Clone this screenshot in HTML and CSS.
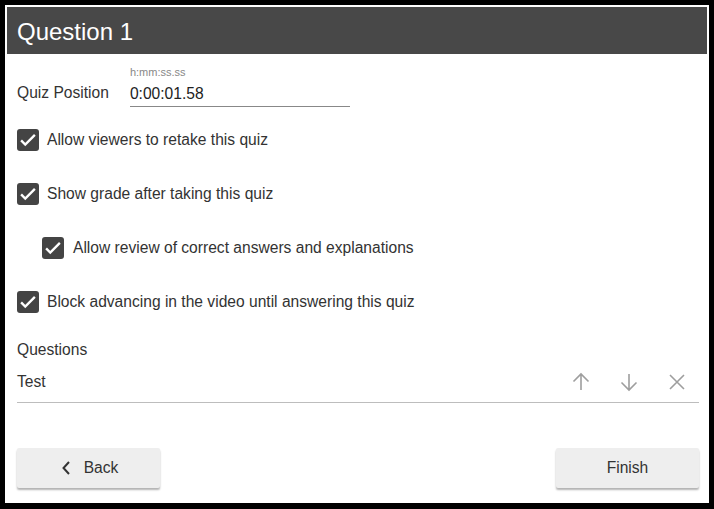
FILE: index.html
```html
<!DOCTYPE html>
<html lang="en">
<head>
    <meta charset="UTF-8">
    <title>Question 1</title>
    <link rel="stylesheet" href="styles.css">
</head>
<body>

    <div class="dialog">
        <div class="dialog-title">Question 1</div>

        <div class="dialog-body">
            <div class="position-row">
                <span class="position-label">Quiz Position</span>
                <div class="field">
                    <span class="field-hint">h:mm:ss.ss</span>
                    <div class="field-input">0:00:01.58</div>
                </div>
            </div>

            <div class="options">
                <label class="check-row">
                    <span class="check"><svg viewBox="0 0 24 24"><path d="M4.5 12.5l4.5 4.5L19.5 6.5"/></svg></span>
                    Allow viewers to retake this quiz
                </label>
                <label class="check-row">
                    <span class="check"><svg viewBox="0 0 24 24"><path d="M4.5 12.5l4.5 4.5L19.5 6.5"/></svg></span>
                    Show grade after taking this quiz
                </label>
                <label class="check-row nested">
                    <span class="check"><svg viewBox="0 0 24 24"><path d="M4.5 12.5l4.5 4.5L19.5 6.5"/></svg></span>
                    Allow review of correct answers and explanations
                </label>
                <label class="check-row">
                    <span class="check"><svg viewBox="0 0 24 24"><path d="M4.5 12.5l4.5 4.5L19.5 6.5"/></svg></span>
                    Block advancing in the video until answering this quiz
                </label>
            </div>

            <div class="questions-title">Questions</div>
            <div class="question-item">
                <span class="question-name">Test</span>
                <div class="question-actions">
                    <svg class="icon" viewBox="0 0 24 24"><path d="M12 20V4M4.5 11.5L12 4l7.5 7.5"/></svg>
                    <svg class="icon" viewBox="0 0 24 24"><path d="M12 4v16M4.5 12.5L12 20l7.5-7.5"/></svg>
                    <svg class="icon" viewBox="0 0 24 24"><path d="M5 5l14 14M19 5L5 19"/></svg>
                </div>
            </div>

            <div class="footer">
                <button class="btn">
                    <svg class="chevron" viewBox="0 0 10 16"><path d="M8 2L2.5 8 8 14"/></svg>
                    Back
                </button>
                <button class="btn">Finish</button>
            </div>
        </div>
    </div>

</body>
</html>
```

FILE: styles.css
```css
/* Page and frame */
html, body {
    margin: 0;
    height: 100%;
}
body {
    background: #000;
    padding: 5px;
    box-sizing: border-box;
    font-family: "Liberation Sans", Arial, sans-serif;
    color: #333;
}

.dialog {
    background: #fff;
    width: 704px;
    height: 498px;
    padding: 2px;
    box-sizing: border-box;
    display: flex;
    flex-direction: column;
}

.dialog-title {
    background: #484848;
    color: #fff;
    font-size: 24px;
    height: 47px;
    line-height: 50px;
    padding: 0 10px;
    flex-shrink: 0;
}

.dialog-body {
    padding: 12px 8px 0 10px;
    display: flex;
    flex-direction: column;
    font-size: 15.6px;
}

/* --- Quiz position --- */
.position-row {
    display: flex;
    align-items: flex-end;
    gap: 21px;
}
.position-label {
    line-height: 20px;
    margin-bottom: 4px;
}
.field {
    display: flex;
    flex-direction: column;
    width: 220px;
}
.field-hint {
    font-size: 11px;
    color: #888;
    line-height: 13px;
}
.field-input {
    height: 27px;
    line-height: 29px;
    border-bottom: 1px solid #888;
    color: #222;
}

/* --- Checkboxes --- */
.options {
    display: flex;
    flex-direction: column;
    gap: 32px;
    margin-top: 22px;
}
.check-row {
    display: flex;
    align-items: center;
    gap: 8px;
    height: 22px;
}
.check-row.nested {
    padding-left: 25px;
    gap: 9px;
}
.check {
    width: 22px;
    height: 22px;
    border-radius: 3px;
    background: #444;
    display: flex;
    align-items: center;
    justify-content: center;
    flex-shrink: 0;
}
.check svg {
    width: 22px;
    height: 22px;
    fill: none;
    stroke: #fff;
    stroke-width: 2.6;
}

/* --- Questions list --- */
.questions-title {
    margin-top: 27px;
    line-height: 20px;
}
.question-item {
    display: flex;
    align-items: center;
    justify-content: space-between;
    margin-top: 10px;
    height: 24px;
    padding-bottom: 8px;
    border-bottom: 1px solid #bdbdbd;
}
.question-actions {
    display: flex;
    gap: 24px;
    padding-right: 10px;
}
.icon {
    width: 24px;
    height: 24px;
    fill: none;
    stroke: #9e9e9e;
    stroke-width: 1.6;
}

/* --- Footer buttons --- */
.footer {
    display: flex;
    justify-content: space-between;
    margin-top: 45px;
}
.btn {
    width: 143px;
    height: 40px;
    border: none;
    border-radius: 2px;
    background: #eeeeee;
    box-shadow: 0 2px 2px rgba(0, 0, 0, 0.3);
    font-family: inherit;
    font-size: 15.6px;
    color: #333;
    display: flex;
    align-items: center;
    justify-content: center;
    gap: 13px;
    padding: 0;
}
.chevron {
    width: 10px;
    height: 16px;
    fill: none;
    stroke: #333;
    stroke-width: 2;
    margin-left: 2px;
}
```
